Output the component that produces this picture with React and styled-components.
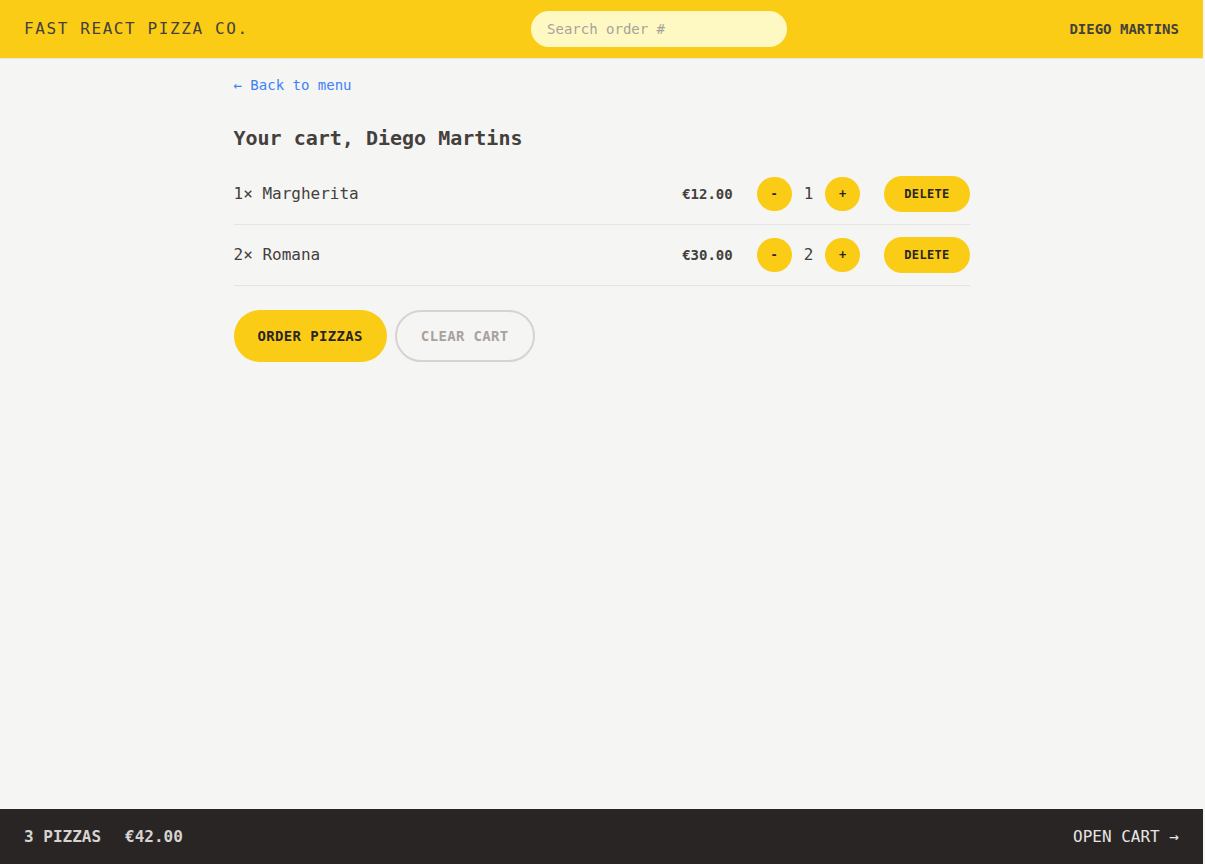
import React from "react";
import styled, { createGlobalStyle } from "styled-components";

const GlobalStyle = createGlobalStyle`
  html, body { margin: 0; padding: 0; }
  body {
    background: #f5f5f4;
    color: #44403c;
    font-family: "DejaVu Sans Mono", "Liberation Mono", monospace;
    -webkit-font-smoothing: antialiased;
  }
  * { box-sizing: border-box; }
`;

const Layout = styled.div`
  display: grid;
  grid-template-rows: auto 1fr auto;
  height: 100vh;
  margin-right: 2px;
`;

const Header = styled.header`
  display: flex;
  align-items: center;
  justify-content: space-between;
  padding: 11px 24px;
  background: #facc15;
  border-bottom: 1px solid #e7e5e4;
  text-transform: uppercase;
`;

const Logo = styled.a`
  font-size: 16px;
  line-height: 24px;
  letter-spacing: 0.1em;
  color: #44403c;
  text-decoration: none;
`;

const SearchInput = styled.input`
  width: 256px;
  height: 36px;
  border: none;
  outline: none;
  border-radius: 9999px;
  background: #fef9c3;
  padding: 8px 16px;
  font-family: inherit;
  font-size: 14px;
  line-height: 20px;
  color: #44403c;
  &::placeholder { color: #a8a29e; }
`;

const UserName = styled.div`
  font-size: 14px;
  line-height: 20px;
  font-weight: 700;
  color: #44403c;
`;

const Scroll = styled.div`
  overflow: hidden;
`;

const Main = styled.main`
  max-width: 768px;
  margin: 0 auto;
`;

const Cart = styled.div`
  padding: 16px 16px 12px;
`;

const BackLink = styled.a`
  font-size: 14px;
  line-height: 20px;
  color: #3b82f6;
  text-decoration: none;
`;

const Title = styled.h2`
  margin: 29px 0 0;
  font-size: 20px;
  line-height: 28px;
  font-weight: 700;
  color: #44403c;
`;

const List = styled.ul`
  list-style: none;
  margin: 12px 0 0;
  padding: 0;
  border-bottom: 1px solid #e7e5e4;
`;

const Item = styled.li`
  display: flex;
  align-items: center;
  justify-content: space-between;
  padding: 12px 0;
  & + & { border-top: 1px solid #e7e5e4; }
`;

const ItemName = styled.p`
  margin: 0;
  font-size: 16px;
  line-height: 24px;
`;

const ItemControls = styled.div`
  display: flex;
  align-items: center;
  gap: 24px;
`;

const Price = styled.p`
  margin: 0;
  font-size: 14px;
  line-height: 20px;
  font-weight: 700;
`;

const Quantity = styled.div`
  display: flex;
  align-items: center;
  gap: 12px;
`;

const Count = styled.span`
  font-size: 16px;
  line-height: 24px;
  color: #44403c;
`;

const Button = styled.button`
  display: inline-flex;
  align-items: center;
  justify-content: center;
  border-radius: 9999px;
  font-family: inherit;
  font-weight: 700;
  text-transform: uppercase;
  letter-spacing: 0.025em;
  cursor: pointer;
  background: ${(p) => (p.$variant === "secondary" ? "transparent" : "#facc15")};
  color: ${(p) => (p.$variant === "secondary" ? "#a8a29e" : "#292524")};
  border: ${(p) => (p.$variant === "secondary" ? "2px solid #d6d3d1" : "none")};
  font-size: ${(p) => (p.$size === "large" ? "14px" : "12px")};
  line-height: ${(p) => (p.$size === "large" ? "20px" : "16px")};
  padding: ${(p) =>
    p.$size === "round"
      ? "0"
      : p.$size === "small"
      ? "10px 20px"
      : p.$variant === "secondary"
      ? "14px 24px"
      : "16px 24px"};
  width: ${(p) => (p.$size === "round" ? "35px" : "auto")};
  height: ${(p) => (p.$size === "round" ? "34px" : "auto")};
`;

const Actions = styled.div`
  display: flex;
  gap: 8px;
  margin-top: 24px;
`;

const Footer = styled.footer`
  display: flex;
  align-items: center;
  justify-content: space-between;
  background: #292524;
  padding: 16px 24px 15px;
  text-transform: uppercase;
  font-size: 16px;
  line-height: 24px;
  color: #e7e5e4;
`;

const Summary = styled.p`
  margin: 0;
  display: flex;
  gap: 24px;
  font-weight: 700;
  color: #d6d3d1;
`;

const OpenCart = styled.a`
  color: #e7e5e4;
  text-decoration: none;
`;

const items = [
  { id: 1, qty: 1, name: "Margherita", price: "€12.00" },
  { id: 2, qty: 2, name: "Romana", price: "€30.00" },
];

export default function App() {
  return (
    <>
      <GlobalStyle />
      <Layout>
        <Header>
          <Logo href="#">Fast React Pizza Co.</Logo>
          <SearchInput placeholder="Search order #" />
          <UserName>Diego Martins</UserName>
        </Header>
        <Scroll>
          <Main>
            <Cart>
              <BackLink href="#">← Back to menu</BackLink>
              <Title>Your cart, Diego Martins</Title>
              <List>
                {items.map((it) => (
                  <Item key={it.id}>
                    <ItemName>
                      {it.qty}× {it.name}
                    </ItemName>
                    <ItemControls>
                      <Price>{it.price}</Price>
                      <Quantity>
                        <Button $size="round">-</Button>
                        <Count>{it.qty}</Count>
                        <Button $size="round">+</Button>
                      </Quantity>
                      <Button $size="small">Delete</Button>
                    </ItemControls>
                  </Item>
                ))}
              </List>
              <Actions>
                <Button $size="large">Order pizzas</Button>
                <Button $size="large" $variant="secondary">
                  Clear cart
                </Button>
              </Actions>
            </Cart>
          </Main>
        </Scroll>
        <Footer>
          <Summary>
            <span>3 pizzas</span>
            <span>€42.00</span>
          </Summary>
          <OpenCart href="#">Open cart →</OpenCart>
        </Footer>
      </Layout>
    </>
  );
}
